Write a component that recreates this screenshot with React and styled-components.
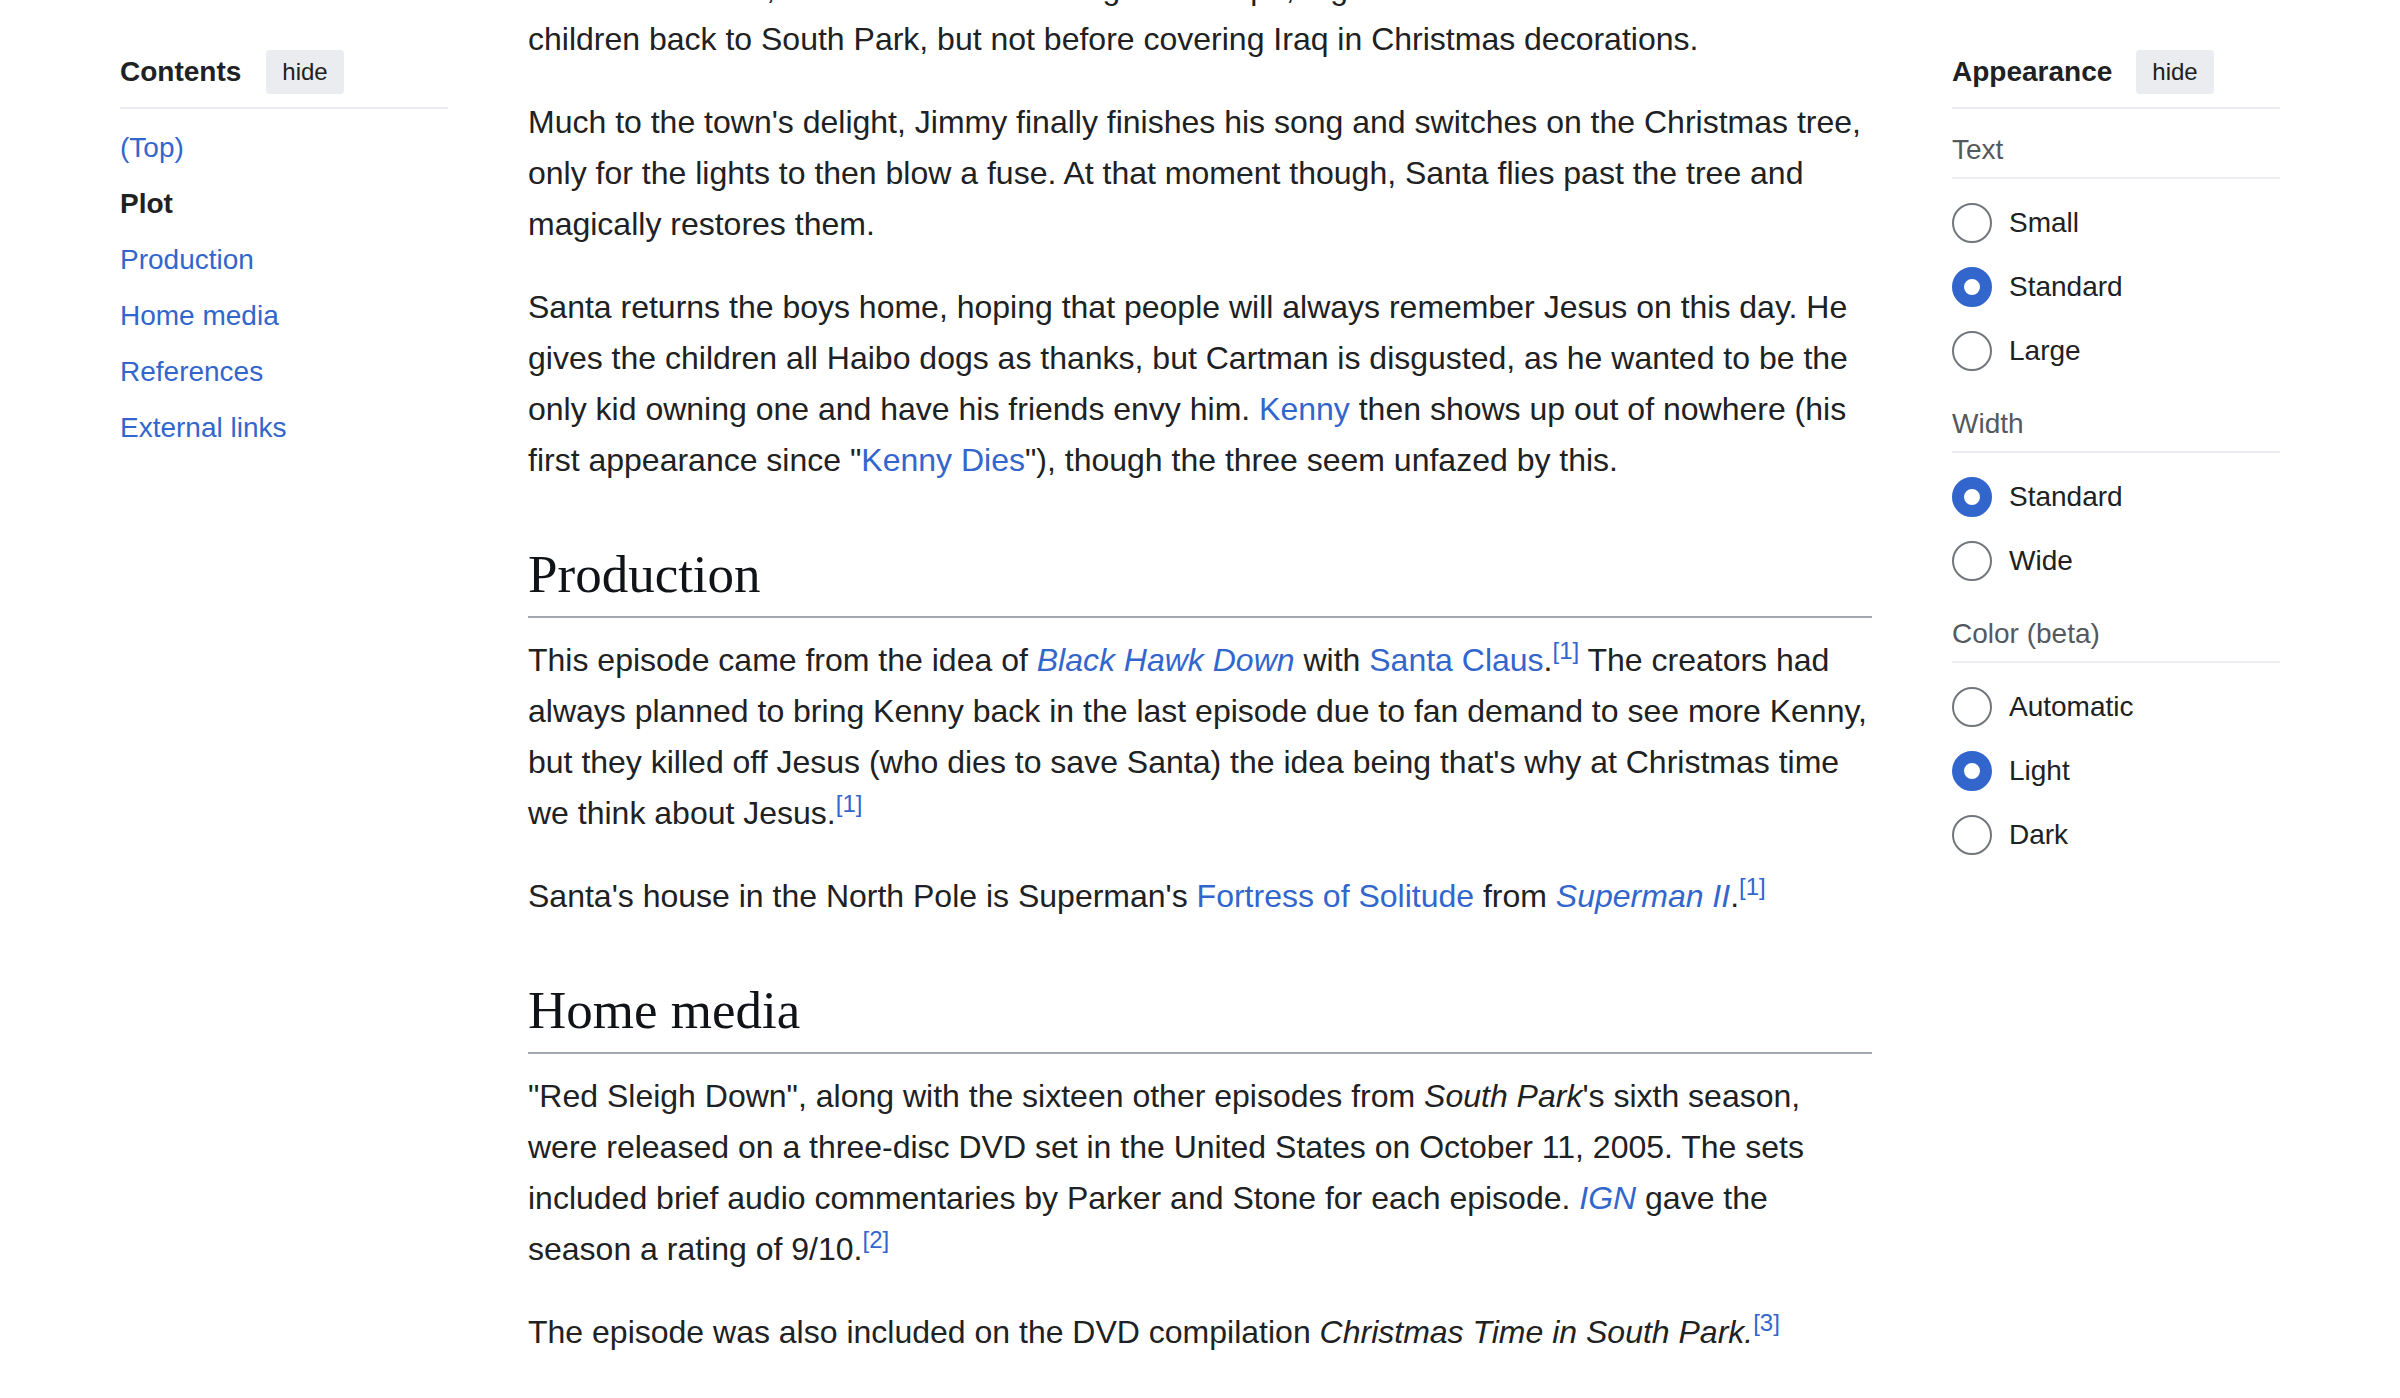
import React from 'react';
import styled, { createGlobalStyle } from 'styled-components';

const GlobalStyle = createGlobalStyle`
  html, body {
    margin: 0;
    padding: 0;
    background: #ffffff;
  }
  body {
    font-family: 'Liberation Sans', Arial, Helvetica, sans-serif;
    color: #202122;
    overflow: hidden;
  }
`;

const Page = styled.div`
  display: grid;
  grid-template-columns: 328px 1344px 328px;
  column-gap: 80px;
  align-items: start;
  padding: 0 120px;
  height: 1398px;
  overflow: hidden;
`;

const Sidebar = styled.aside`
  padding-top: 50px;
`;

const PanelHeader = styled.div`
  display: flex;
  align-items: center;
  gap: ${(p) => p.$gap || 25}px;
  padding-bottom: 13px;
  border-bottom: 2px solid #eaecf0;
`;

const PanelTitle = styled.div`
  font-size: 28px;
  line-height: 34px;
  font-weight: bold;
  color: #202122;
`;

const HideButton = styled.button`
  height: 44px;
  padding: 0 16px;
  border: none;
  border-radius: 4px;
  background: #eaecf0;
  font-family: inherit;
  font-size: 24px;
  color: #202122;
  cursor: pointer;
`;

const TocList = styled.nav`
  display: flex;
  flex-direction: column;
  margin-top: 11px;
`;

const TocItem = styled.a`
  display: block;
  padding: 11px 0;
  font-size: 28px;
  line-height: 34px;
  text-decoration: none;
  color: ${(p) => (p.$active ? '#202122' : '#3366cc')};
  font-weight: ${(p) => (p.$active ? 'bold' : 'normal')};
`;

const Group = styled.div`
  margin-top: 24px;
`;

const GroupLabel = styled.div`
  font-size: 28px;
  line-height: 34px;
  color: #54595d;
  padding-bottom: 10px;
  border-bottom: 2px solid #eaecf0;
`;

const RadioList = styled.div`
  display: flex;
  flex-direction: column;
  padding-top: 12px;
`;

const RadioRow = styled.label`
  display: flex;
  align-items: center;
  gap: 17px;
  height: 64px;
  font-size: 28px;
  color: #202122;
  cursor: pointer;
`;

const RadioCircle = styled.span`
  box-sizing: border-box;
  width: 40px;
  height: 40px;
  flex: none;
  border-radius: 50%;
  background: #ffffff;
  border: ${(p) => (p.$checked ? '12px solid #3366cc' : '2px solid #72777d')};
`;

const Main = styled.main`
  margin-top: -37px;
  min-width: 0;
`;

/* line breaks follow the original article layout */
const Para = styled.p`
  margin: 0 0 32px;
  font-size: 32px;
  line-height: 51px;
  color: #202122;
  white-space: nowrap;
`;

const Heading = styled.h2`
  margin: 54px 0 17px;
  padding-bottom: 7px;
  border-bottom: 2px solid #a2a9b1;
  font-family: 'Liberation Serif', Georgia, 'Times New Roman', serif;
  font-size: 53px;
  line-height: 69px;
  font-weight: normal;
  color: #101418;
`;

const Link = styled.a`
  color: #3366cc;
  text-decoration: none;
  font-style: ${(p) => (p.$italic ? 'italic' : 'normal')};
`;

const Ref = styled.sup`
  font-size: 24px;
  line-height: 1;
  vertical-align: 12px;
  color: #3366cc;
`;

const Cite = ({ n }) => <Ref>[{n}]</Ref>;

const appearance = [
  { label: 'Text', options: ['Small', 'Standard', 'Large'], checked: 'Standard' },
  { label: 'Width', options: ['Standard', 'Wide'], checked: 'Standard' },
  { label: 'Color (beta)', options: ['Automatic', 'Light', 'Dark'], checked: 'Light' },
];

const toc = ['(Top)', 'Plot', 'Production', 'Home media', 'References', 'External links'];

function App() {
  return (
    <>
      <GlobalStyle />
      <Page>
        <Sidebar>
          <PanelHeader>
            <PanelTitle>Contents</PanelTitle>
            <HideButton>hide</HideButton>
          </PanelHeader>
          <TocList>
            {toc.map((item) => (
              <TocItem key={item} href="#" $active={item === 'Plot'}>
                {item}
              </TocItem>
            ))}
          </TocList>
        </Sidebar>

        <Main>
          <Para>
            Santa is rescued, but Jesus is shot during the escape; a grateful Santa then flies the
            <br />
            children back to South Park, but not before covering Iraq in Christmas decorations.
          </Para>
          <Para>
            Much to the town's delight, Jimmy finally finishes his song and switches on the Christmas tree,
            <br />
            only for the lights to then blow a fuse. At that moment though, Santa flies past the tree and
            <br />
            magically restores them.
          </Para>
          <Para>
            Santa returns the boys home, hoping that people will always remember Jesus on this day. He
            <br />
            gives the children all Haibo dogs as thanks, but Cartman is disgusted, as he wanted to be the
            <br />
            only kid owning one and have his friends envy him. <Link href="#">Kenny</Link> then shows up out of
            nowhere (his
            <br />
            first appearance since "<Link href="#">Kenny Dies</Link>"), though the three seem unfazed by this.
          </Para>

          <Heading>Production</Heading>
          <Para>
            This episode came from the idea of <Link href="#" $italic>Black Hawk Down</Link> with{' '}
            <Link href="#">Santa Claus</Link>.<Cite n={1} /> The creators had
            <br />
            always planned to bring Kenny back in the last episode due to fan demand to see more Kenny,
            <br />
            but they killed off Jesus (who dies to save Santa) the idea being that's why at Christmas time
            <br />
            we think about Jesus.<Cite n={1} />
          </Para>
          <Para>
            Santa's house in the North Pole is Superman's <Link href="#">Fortress of Solitude</Link> from{' '}
            <Link href="#" $italic>Superman II</Link>.<Cite n={1} />
          </Para>

          <Heading>Home media</Heading>
          <Para>
            "Red Sleigh Down", along with the sixteen other episodes from <i>South Park</i>'s sixth season,
            <br />
            were released on a three-disc DVD set in the United States on October 11, 2005. The sets
            <br />
            included brief audio commentaries by Parker and Stone for each episode.{' '}
            <Link href="#" $italic>IGN</Link> gave the
            <br />
            season a rating of 9/10.<Cite n={2} />
          </Para>
          <Para>
            The episode was also included on the DVD compilation <i>Christmas Time in South Park.</i>
            <Cite n={3} />
          </Para>
        </Main>

        <Sidebar>
          <PanelHeader $gap={24}>
            <PanelTitle>Appearance</PanelTitle>
            <HideButton>hide</HideButton>
          </PanelHeader>
          {appearance.map((group) => (
            <Group key={group.label}>
              <GroupLabel>{group.label}</GroupLabel>
              <RadioList>
                {group.options.map((opt) => (
                  <RadioRow key={opt}>
                    <RadioCircle $checked={opt === group.checked} />
                    {opt}
                  </RadioRow>
                ))}
              </RadioList>
            </Group>
          ))}
        </Sidebar>
      </Page>
    </>
  );
}

export default App;
